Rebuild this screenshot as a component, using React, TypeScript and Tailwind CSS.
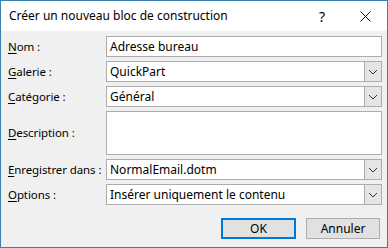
import React from "react";

const font = { fontFamily: '"Noto Sans", "Open Sans", Arial, sans-serif' };

function Label({ first, rest }: { first: string; rest: string }) {
  return (
    <div className="w-[98px] shrink-0 whitespace-nowrap text-[11.5px] tracking-[-0.1px] text-black leading-none">
      <span className="underline underline-offset-2">{first}</span>
      {rest}
    </div>
  );
}

function Chevron() {
  return (
    <svg width="10" height="6" viewBox="0 0 10 6" fill="none">
      <path d="M1 1 L5 5 L9 1" stroke="#333" strokeWidth="1" />
    </svg>
  );
}

function Select({ value }: { value: string }) {
  return (
    <div className="flex-1 h-[21px] flex border border-[#acacac] bg-white">
      <div className="flex-1 flex items-center pl-[3px] text-[12px] text-black">{value}</div>
      <div className="w-[17px] flex items-center justify-center bg-[#e5e5e5] border-l border-[#acacac]">
        <Chevron />
      </div>
    </div>
  );
}

export default function App() {
  return (
    <div
      className="w-[388px] h-[248px] border border-[#3b7fae] bg-[#f0f0f0] flex flex-col"
      style={font}
    >
      <div className="h-[30px] bg-white flex items-center pl-[8px] text-[12px] text-black">
        <span className="flex-1">Créer un nouveau bloc de construction</span>
        <span className="w-[20px] text-[14px] text-center mr-[28px]">?</span>
        <svg width="11" height="11" viewBox="0 0 11 11" className="mr-[16px]">
          <path d="M0.5 0.5 L10.5 10.5 M10.5 0.5 L0.5 10.5" stroke="#111" strokeWidth="1" />
        </svg>
      </div>

      <div className="flex-1 flex flex-col pt-[5px] pl-[7px] pr-[5px]">
        <div className="flex items-center">
          <Label first="N" rest="om :" />
          <div className="flex-1 h-[21px] flex items-center border border-[#acacac] bg-white pl-[3px] text-[12px] text-black">
            Adresse bureau
          </div>
        </div>
        <div className="flex items-center mt-[4px]">
          <Label first="G" rest="alerie :" />
          <Select value="QuickPart" />
        </div>
        <div className="flex items-center mt-[4px]">
          <Label first="C" rest="atégorie :" />
          <Select value="Général" />
        </div>
        <div className="flex items-center mt-[4px]">
          <Label first="D" rest="escription :" />
          <div className="flex-1 h-[44px] border border-[#acacac] bg-white" />
        </div>
        <div className="flex items-center mt-[4px]">
          <Label first="E" rest="nregistrer dans :" />
          <Select value="NormalEmail.dotm" />
        </div>
        <div className="flex items-center mt-[4px]">
          <Label first="O" rest="ptions :" />
          <Select value="Insérer uniquement le contenu" />
        </div>

        <div className="flex justify-end gap-[10px] mt-[13px] pr-[2px]">
          <button className="w-[75px] h-[21px] border-2 border-[#0078d7] bg-[#e1e1e1] text-[12px] text-black flex items-center justify-center">
            OK
          </button>
          <button className="w-[74px] h-[21px] border border-[#adadad] bg-[#e1e1e1] text-[12px] text-black flex items-center justify-center">
            Annuler
          </button>
        </div>
      </div>
    </div>
  );
}
